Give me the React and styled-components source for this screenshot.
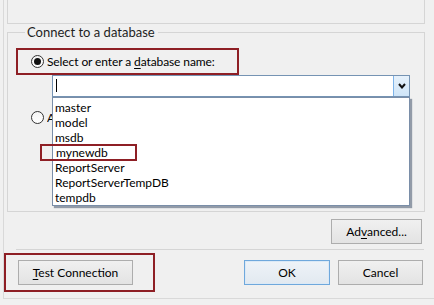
import React from 'react';
import styled, { createGlobalStyle, css } from 'styled-components'

const Global = createGlobalStyle`
  html, body {
    margin: 0;
    padding: 0;
    background: #f0f0f0;
  }
  body {
    font-family: Lato, "Noto Sans", sans-serif;
    font-size: 12px;
    color: #000;
  }
`

const Screen = styled.div`
  width: 434px;
  height: 305px;
  overflow: hidden;
  position: relative;
`

const Panel = styled.div`
  margin-left: 3px;
  width: 431px;
  height: 299px;
  box-sizing: border-box;
  border-left: 1px solid #d9d9d9;
  border-bottom: 1px solid #d9d9d9;
  padding-left: 3px;
`

const TopBox = styled.div`
  width: 418px;
  height: 24px;
  box-sizing: border-box;
  border: 1px solid #d5d5d5;
  border-top: none;
`

const Group = styled.fieldset`
  margin: 1px 0 0 0;
  padding: 0;
  width: 418px;
  height: 187px;
  box-sizing: border-box;
  border: 1px solid #d5d5d5;
  position: relative;
`

const Legend = styled.legend`
  margin-left: 17px;
  padding: 0 3px 0 2px;
  font-size: 13px;
  line-height: 14px;
  color: #1e1e1e;
`

const Mark = styled.div`
  border: 2px solid #8e1f25;
  box-sizing: border-box;
`

const RadioMark = styled(Mark)`
  margin: 9px 0 0 8px;
  width: 223px;
  height: 27px;
  display: flex;
  align-items: center;
  padding-left: 13px;
`

const RadioRow = styled.div`
  display: flex;
  align-items: center;
  gap: 3px;
  ${p => p.$second && css`
    margin: 13px 0 0 23px;
  `}
`

const Radio = styled.span`
  width: 13px;
  height: 13px;
  box-sizing: border-box;
  border-radius: 50%;
  border: 1px solid #333;
  background: linear-gradient(#f4f4f4, #ffffff);
  display: flex;
  align-items: center;
  justify-content: center;
  &::after {
    content: '';
    display: ${p => (p.$checked ? 'block' : 'none')};
    width: 7px;
    height: 7px;
    border-radius: 50%;
    background: #111;
  }
`

const Label = styled.span`
  white-space: nowrap;
  font-size: 12px;
  letter-spacing: -0.1px;
  ${p => p.$clip && css`
    width: 6px;
    overflow: hidden;
  `}
`

const Key = styled.span`
  text-decoration: underline;
  text-underline-offset: 2px;
`

const Combo = styled.div`
  margin-left: 44px;
  width: 358px;
  height: 22px;
  box-sizing: border-box;
  border: 1px solid #7593b3;
  background: #fff;
  display: flex;
  position: relative;
`

const Caret = styled.span`
  width: 1px;
  height: 13px;
  background: #000;
  margin: 3px 0 0 3px;
`

const DropButton = styled.div`
  margin-left: auto;
  width: 16px;
  height: 20px;
  box-sizing: border-box;
  border-left: 1px solid #7eb4ea;
  background: linear-gradient(#e6f1fb, #cfe5f8);
  display: flex;
  align-items: center;
  justify-content: center;
`

const List = styled.ul`
  position: absolute;
  top: 21px;
  left: -1px;
  width: 358px;
  height: 109px;
  box-sizing: border-box;
  margin: 0;
  padding: 2px 0 0 2px;
  list-style: none;
  background: #fff;
  border: 1px solid #7a8ea8;
  box-shadow: 2px 2px 1px rgba(70, 85, 110, 0.55);
  z-index: 2;
`

const Item = styled.li`
  height: 15px;
  line-height: 15px;
  display: flex;
  ${p => p.$marked && css`
    margin-left: -15px;
    width: 97px;
    height: 17px;
    margin-top: -1px;
    margin-bottom: -1px;
    box-sizing: border-box;
    border: 2px solid #8e1f25;
    padding-left: 14px;
    line-height: 13px;
  `}
`

const ButtonRow = styled.div`
  display: flex;
  justify-content: flex-end;
  align-items: flex-start;
  margin-left: 9px;
  width: 408px;
  height: 38px;
  box-sizing: border-box;
  padding: 7px 2px 0 0;
  border-bottom: 1px solid #d5d5d5;
`

const Button = styled.button`
  font-family: Lato, "Noto Sans", sans-serif;
  font-size: 12px;
  color: #000;
  height: 25px;
  box-sizing: border-box;
  border: 1px solid #adadad;
  background: linear-gradient(#f0f0f0, #e3e3e3);
  padding: 0;
  width: ${p => p.$w || 86}px;
  ${p => p.$primary && css`
    border-color: #6fa8dc;
    box-shadow: inset 0 0 0 1px #dbe9f6;
    background: linear-gradient(#eef3f8, #e2e9f0);
  `}
`

const Footer = styled.div`
  display: flex;
  align-items: center;
  margin-top: 3px;
`

const TestMark = styled(Mark)`
  margin-left: -3px;
  width: 151px;
  height: 39px;
  padding: 5px 0 0 12px;
`

const Actions = styled.div`
  display: flex;
  gap: 8px;
  margin-left: 89px;
`

const Grip = styled.div`
  position: absolute;
  right: 3px;
  bottom: 9px;
  width: 5px;
  height: 5px;
  background-image: radial-gradient(#b8b8b8 45%, transparent 50%);
  background-size: 2px 2px;
`

const Chevron = () => (
  <svg width="8" height="6" viewBox="0 0 8 6">
    <polyline points="1,1 4,4.5 7,1" fill="none" stroke="#111" strokeWidth="2" />
  </svg>
)

const databases = ['master', 'model', 'msdb', 'mynewdb', 'ReportServer', 'ReportServerTempDB', 'tempdb']

export default function App() {
  return (
    <Screen>
      <Global />
      <Panel>
        <TopBox />
        <Group>
          <Legend>Connect to a database</Legend>
          <RadioMark>
            <RadioRow>
              <Radio $checked />
              <Label>Select or enter a <Key>d</Key>atabase name:</Label>
            </RadioRow>
          </RadioMark>
          <Combo>
            <Caret />
            <DropButton><Chevron /></DropButton>
            <List>
              {databases.map(db => (
                <Item key={db} $marked={db === 'mynewdb'}>{db}</Item>
              ))}
            </List>
          </Combo>
          <RadioRow $second>
            <Radio />
            <Label $clip>Attach a database file:</Label>
          </RadioRow>
        </Group>
        <ButtonRow>
          <Button $w={91}>Ad<Key>v</Key>anced...</Button>
        </ButtonRow>
        <Footer>
          <TestMark>
            <Button $w={115}><Key>T</Key>est Connection</Button>
          </TestMark>
          <Actions>
            <Button $primary>OK</Button>
            <Button $w={85}>Cancel</Button>
          </Actions>
        </Footer>
      </Panel>
      <Grip />
    </Screen>
  )
}
